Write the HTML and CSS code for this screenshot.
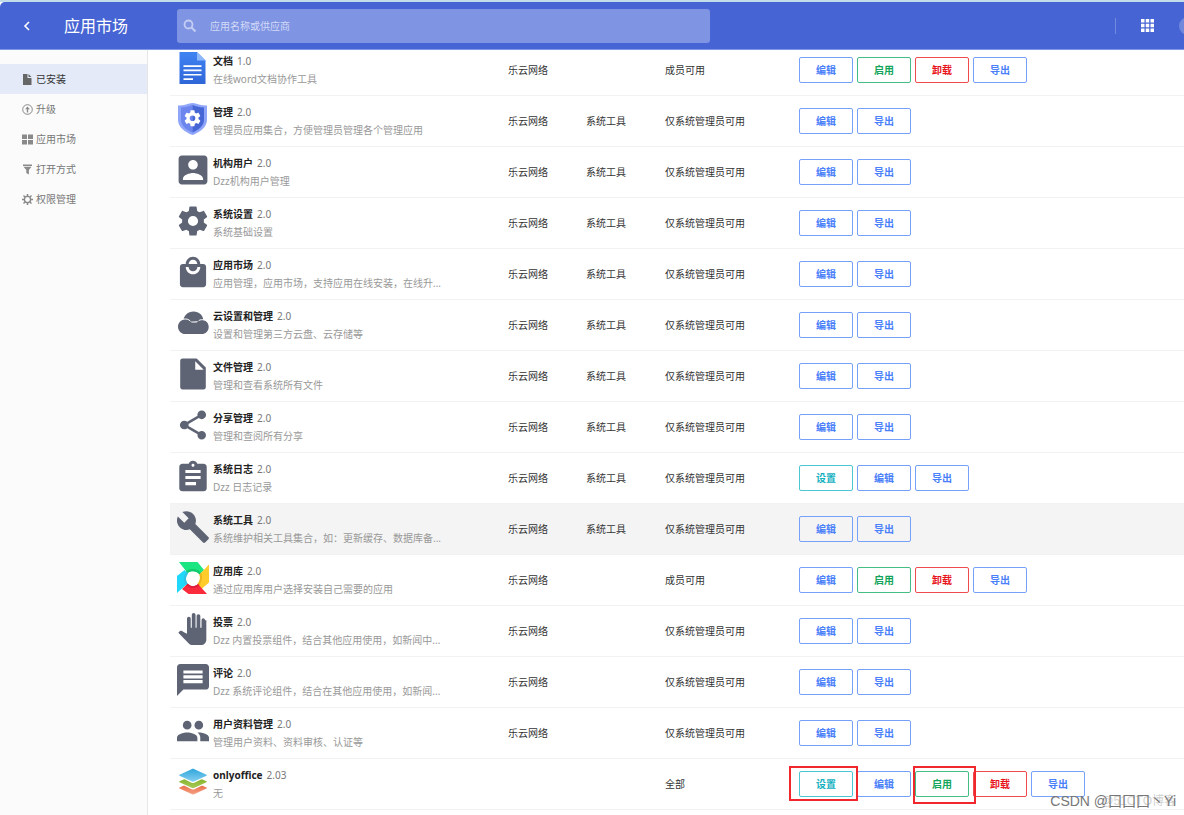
FILE: index.html
```html
<!DOCTYPE html>
<html lang="zh-CN">
<head>
<meta charset="utf-8">
<title>应用市场</title>
<link rel="stylesheet" href="styles.css">
</head>
<body>
<svg class="sprite" aria-hidden="true">
  <symbol id="i-doc" viewBox="0 0 32 32">
    <linearGradient id="gd" x1="0" y1="0" x2="0" y2="1"><stop offset="0" stop-color="#3f83f3"/><stop offset="1" stop-color="#2f66d8"/></linearGradient>
    <path fill="url(#gd)" d="M2.500 0H20l8.500 8.500V32h-26z"/><path fill="#8db8fb" d="M20 0l8.500 8.500H20z"/>
    <path fill="#fff" d="M6.500 13.300h18v1.600h-18zM6.500 17.600h18v1.600h-18zM6.500 21.900h18v1.600h-18zM6.500 26.200h9.500v1.700H6.500z"/>
  </symbol>
  <symbol id="i-shield" viewBox="0 0 32 32">
    <path fill="#8fa5fa" d="M1 2.500C6 3 11 .5 15.500 0 20 .5 25 3 30 2.500V17c0 7-7.500 12.500-14.500 15C8.500 29.500 1 24 1 17z"/>
    <path fill="#6c86ee" d="M4 4.500c4 0 8-1 11.500-2.500v27.500C9.500 27 4 22.500 4 17z"/>
    <path fill="#4766d5" d="M27 4.500c-4 0-8-1-11.500-2.500v27.500C21.500 27 27 22.500 27 17z"/>
    <path fill="#fff" transform="translate(5.900 5.700) scale(.8)" d="M19.430 12.980c.04-.32.07-.64.07-.98s-.03-.66-.07-.98l2.110-1.650c.19-.15.24-.42.12-.64l-2-3.460c-.12-.22-.39-.3-.61-.22l-2.490 1c-.52-.4-1.080-.73-1.690-.98l-.38-2.650C14.460 2.180 14.250 2 14 2h-4c-.25 0-.46.18-.49.42l-.38 2.650c-.61.25-1.170.59-1.690.98l-2.490-1c-.23-.09-.49 0-.61.22l-2 3.460c-.13.22-.07.49.12.64l2.110 1.650c-.04.32-.07.65-.07.98s.03.66.07.98l-2.110 1.650c-.19.15-.24.42-.12.64l2 3.460c.12.22.39.3.61.22l2.490-1c.52.4 1.080.73 1.690.98l.38 2.650c.03.24.24.42.49.42h4c.25 0 .46-.18.49-.42l.38-2.650c.61-.25 1.170-.59 1.690-.98l2.490 1c.23.09.49 0 .61-.22l2-3.460c.12-.22.07-.49-.12-.64zM12 15.500a3.500 3.500 0 1 1 0-7 3.500 3.500 0 0 1 0 7z"/>
  </symbol>
  <symbol id="i-user" viewBox="2 2 20 20"><path d="M3 5v14c0 1.100.89 2 2 2h14c1.100 0 2-.9 2-2V5c0-1.100-.9-2-2-2H5c-1.110 0-2 .9-2 2zm12 3.700c0 1.660-1.340 3-3 3s-3-1.340-3-3 1.340-3 3-3 3 1.340 3 3zm-9.300 8.800c0-2.300 4.300-3.600 6.300-3.600s6.300 1.300 6.300 3.600v.8H5.700v-.8z"/></symbol>
  <symbol id="i-gear" viewBox="1 1 22 22"><path d="M19.430 12.980c.04-.32.07-.64.07-.98s-.03-.66-.07-.98l2.110-1.650c.19-.15.24-.42.12-.64l-2-3.460c-.12-.22-.39-.3-.61-.22l-2.490 1c-.52-.4-1.080-.73-1.690-.98l-.38-2.650C14.460 2.180 14.250 2 14 2h-4c-.25 0-.46.18-.49.42l-.38 2.650c-.61.25-1.170.59-1.690.98l-2.490-1c-.23-.09-.49 0-.61.22l-2 3.460c-.13.22-.07.49.12.64l2.110 1.650c-.04.32-.07.65-.07.98s.03.66.07.98l-2.110 1.650c-.19.15-.24.42-.12.64l2 3.460c.12.22.39.3.61.22l2.490-1c.52.4 1.080.73 1.690.98l.38 2.650c.03.24.24.42.49.42h4c.25 0 .46-.18.49-.42l.38-2.650c.61-.25 1.170-.59 1.690-.98l2.490 1c.23.09.49 0 .61-.22l2-3.460c.12-.22.07-.49-.12-.64zM12 15.500a3.500 3.500 0 1 1 0-7 3.500 3.500 0 0 1 0 7z"/></symbol>
  <symbol id="i-bag" viewBox="1 .5 22 22"><path d="M19 6h-2c0-2.760-2.240-5-5-5S7 3.240 7 6H5c-1.100 0-1.990.9-1.990 2L3 20c0 1.100.9 2 2 2h14c1.100 0 2-.9 2-2V8c0-1.100-.9-2-2-2zm-7-3c1.660 0 3 1.340 3 3H9c0-1.660 1.340-3 3-3zm0 10c-2.760 0-5-2.240-5-5h2c0 1.660 1.340 3 3 3s3-1.340 3-3h2c0 2.760-2.240 5-5 5z"/></symbol>
  <symbol id="i-cloud" viewBox="0 0 32 32"><path d="M6 15C6.500 8.500 11 4.500 16.500 4.500S26 8 26.500 14z"/><path d="M8.200 12.400c3 0 5.200 1.500 6.400 3.200h5.200c1-1.500 2.800-2.600 5.200-2.600 3.800 0 6.700 3 6.700 6.900S28.600 27 24.700 27H8.300C4.200 27 1 23.800 1 19.700s3.200-7.300 7.200-7.300z"/><path class="gap" d="M6 12.200c3.200-.6 5.600 0 7.400 1.900M27.500 13c-2.300-.6-4.300-.3-5.800.6"/></symbol>
  <symbol id="i-file" viewBox="2 2 20 20"><path fill-rule="evenodd" d="M5.500 2.300c-1 0-1.500.6-1.500 1.500v16.400c0 1 .6 1.500 1.500 1.500h13c1 0 1.500-.6 1.500-1.500V8l-5.700-5.700zm7.900 1.700 5.300 5.300h-5.300z"/></symbol>
  <symbol id="i-share" viewBox="1 1 22 22"><path d="M18 16.080c-.76 0-1.440.3-1.960.77L8.910 12.700c.05-.23.09-.46.09-.7s-.04-.47-.09-.7l7.050-4.110c.54.5 1.250.81 2.040.81 1.660 0 3-1.340 3-3s-1.340-3-3-3-3 1.340-3 3c0 .24.04.47.09.7L8.040 9.810C7.500 9.310 6.790 9 6 9c-1.660 0-3 1.340-3 3s1.340 3 3 3c.79 0 1.500-.31 2.040-.81l7.120 4.160c-.05.21-.08.43-.08.65 0 1.610 1.310 2.920 2.920 2.920s2.920-1.310 2.920-2.920-1.310-2.920-2.920-2.920z"/></symbol>
  <symbol id="i-log" viewBox="1.500 .5 21 21"><path d="M19 3h-4.180C14.400 1.840 13.300 1 12 1c-1.300 0-2.400.84-2.820 2H5c-1.100 0-2 .9-2 2v14c0 1.100.9 2 2 2h14c1.100 0 2-.9 2-2V5c0-1.100-.9-2-2-2zm-7 0c.55 0 1 .45 1 1s-.45 1-1 1-1-.45-1-1 .45-1 1-1zm2 14H7v-2h7v2zm3-4H7v-2h10v2zm0-4H7V7h10v2z"/></symbol>
  <symbol id="i-tool" viewBox="1 1 22 22"><path d="M22.700 19l-9.100-9.100c.9-2.300.4-5-1.500-6.900-2-2-5-2.400-7.400-1.300L9 6 6 9 1.600 4.700C.4 7.100.9 10.100 2.900 12.100c1.900 1.900 4.600 2.400 6.900 1.500l9.100 9.100c.4.4 1 .4 1.400 0l2.300-2.300c.5-.4.5-1.100.1-1.400z"/></symbol>
  <symbol id="i-store" viewBox="0 0 32 32">
    <path fill="#1be580" d="M2 0h18.500L27 8l-4.500 4.500c-3-3.800-8-4.300-12-1.500z"/>
    <path fill="#12c96c" d="M10.500 11c4-2.800 9-2.300 12 1.500l1.600-1.600c-4-4.600-10.500-5-15.200-1.400z"/>
    <path fill="#ffcc2b" d="M32 2.500v18L24.500 27l-4-5c2.600-3 3-6 2-9.500z"/>
    <path fill="#edb51c" d="M22.500 12.500c1 3.500.6 6.500-2 9.500l1.300 1.700c3.300-3.700 4-8 2.400-12.900z"/>
    <path fill="#fb2b3e" d="M30 32H11.500L5 27l5.500-5.500c3 3.300 7.500 3.300 10.500.5z"/>
    <path fill="#e01f3c" d="M10.500 21.500c3 3.300 7.500 3.300 10.500.5l1.400 1.600c-4 3.400-9.300 3.300-13.300-.7z"/>
    <path fill="#1fd8fa" d="M0 31V14l7.500-6 3.500 3.500c-2.300 3-2.800 6.500-.5 10z"/>
    <path fill="#35c2e2" d="M11 11.500c-2.300 3-2.800 6.500-.5 10L9 23c-3-4-2.800-8.700.5-13z"/>
  </symbol>
  <symbol id="i-hand" viewBox="0 0 24 24"><path d="M22 5.500V20c0 2.200-1.800 4-4 4h-6.300c-1.080 0-2.100-.43-2.850-1.190L1 14.830s1.260-1.230 1.300-1.250c.22-.19.49-.29.79-.29.22 0 .42.06.6.16.04.01 3.810 2.060 3.810 2.060V4.300c0-.83.57-1.500 1.400-1.500s1.400.67 1.400 1.500V11h.8V1.500c0-.83.57-1.500 1.400-1.500s1.400.67 1.400 1.500V11h.8V2.500c0-.83.57-1.500 1.400-1.500s1.400.67 1.400 1.500V11h.9V5.500c0-.83.57-1.500 1.300-1.500s1.300.67 1.300 1.500z"/></symbol>
  <symbol id="i-comment" viewBox="2 2 20 20"><path d="M20 2H4c-1.100 0-1.990.9-1.990 2L2 22l4-4h14c1.100 0 2-.9 2-2V4c0-1.100-.9-2-2-2zm-2 12H6v-2h12v2zm0-3H6V9h12v2zm0-3H6V6h12v2z"/></symbol>
  <symbol id="i-people" viewBox="1 1 22 22"><path d="M16 11c1.660 0 2.990-1.340 2.990-3S17.660 5 16 5c-1.660 0-3 1.340-3 3s1.340 3 3 3zm-8 0c1.660 0 2.990-1.340 2.990-3S9.660 5 8 5C6.340 5 5 6.340 5 8s1.340 3 3 3zm0 2c-2.330 0-7 1.170-7 3.500V19h14v-2.500c0-2.330-4.670-3.500-7-3.500zm8 0c-.29 0-.62.02-.97.05 1.160.84 1.970 1.970 1.970 3.450V19h6v-2.500c0-2.330-4.670-3.500-7-3.500z"/></symbol>
  <symbol id="i-office" viewBox="0 0 32 32">
    <linearGradient id="gr" x1="0" y1="0" x2="0" y2="1"><stop offset="0" stop-color="#e2592f"/><stop offset="1" stop-color="#f6a184"/></linearGradient>
    <linearGradient id="gg" x1="0" y1="0" x2="0" y2="1"><stop offset="0" stop-color="#78a91b"/><stop offset="1" stop-color="#a9cc5a"/></linearGradient>
    <linearGradient id="gb" x1="0" y1="0" x2="0" y2="1"><stop offset="0" stop-color="#31a6dc"/><stop offset="1" stop-color="#84cff0"/></linearGradient>
    <path fill="url(#gr)" d="M2.500 21.500 16 15.500l13.500 6c.5.300.5.700 0 1l-12 5.500c-1 .5-2 .5-3 0l-12-5.500c-.5-.3-.5-.7 0-1z"/>
    <path fill="#fff" d="M2 17l12.500 6.200c1 .4 2 .4 3 0L30 17z"/>
    <path fill="url(#gg)" d="M2.500 15.200 16 9.500l13.500 5.700c.5.300.5.700 0 1l-12 5.600c-1 .5-2 .5-3 0l-12-5.600c-.5-.3-.5-.7 0-1z"/>
    <path fill="#fff" d="M2 10.500l12.500 6.200c1 .4 2 .4 3 0L30 10.500z"/>
    <path fill="url(#gb)" d="M2.500 8.700 14.500 3.200c1-.5 2-.5 3 0l12 5.500c.5.300.5.700 0 1l-12 5.600c-1 .5-2 .5-3 0l-12-5.600c-.5-.3-.5-.7 0-1z"/>
  </symbol>
</svg>

<header class="topbar">
  <button class="back" type="button" aria-label="返回"><svg width="8" height="10" viewBox="0 0 8 10"><path d="M6 1 2 5l4 4" fill="none" stroke="#fff" stroke-width="1.600"/></svg></button>
  <h1 class="title">应用市场</h1>
  <label class="search">
    <svg width="14" height="14" viewBox="0 0 14 14"><circle cx="5.500" cy="5.500" r="4" fill="none" stroke="#c3cdf3" stroke-width="1.800"/><path d="M8.500 8.500l4 4" stroke="#c3cdf3" stroke-width="2.200"/></svg>
    <input type="text" placeholder="应用名称或供应商" aria-label="搜索应用">
  </label>
  <div class="actions">
    <span class="divider"></span>
    <button class="apps" type="button" aria-label="应用"><svg width="13" height="13" viewBox="0 0 13 13" fill="#fff"><path d="M0 0h3.500v3.500H0zM4.750 0h3.500v3.500h-3.500zM9.500 0H13v3.500H9.500zM0 4.750h3.500v3.500H0zM4.750 4.750h3.500v3.500h-3.500zM9.500 4.750H13v3.500H9.500zM0 9.500h3.500V13H0zM4.750 9.500h3.500V13h-3.500zM9.500 9.500H13V13H9.500z"/></svg></button>
    <span class="avatar"></span>
  </div>
</header>

<div class="layout">
  <nav class="sidebar">
    <a class="nav active" href="#"><svg viewBox="0 0 11 11"><path d="M1 0h4.500v4H9.500v7H1zM6.500 0l3 3h-3z"/></svg>已安装</a>
    <a class="nav" href="#"><svg viewBox="0 0 11 11"><circle cx="5.500" cy="5.500" r="4.800" fill="none" stroke="#888"/><path d="M5.500 2.500l2.400 2.700H6.200v3.300H4.800V5.200H3.100z"/></svg>升级</a>
    <a class="nav" href="#"><svg viewBox="0 0 11 11"><path d="M0 .5h5V5H0zM6 .5h5V5H6zM0 6h5v4.500H0zM6 6h5v4.500H6z"/></svg>应用市场</a>
    <a class="nav" href="#"><svg viewBox="0 0 11 11"><path d="M1 .5h9V2H1zM1.500 2.700h8L6.900 6v4.500L4.300 9V6z"/></svg>打开方式</a>
    <a class="nav" href="#"><svg viewBox="0 0 11 11"><circle cx="5.500" cy="5.500" r="3.100" fill="none" stroke="#888" stroke-width="1.400"/><path d="M4.700 0h1.600v2H4.700zM4.700 9h1.600v2H4.700zM0 4.700h2v1.600H0zM9 4.700h2v1.600H9zM1 2l1-1 1.500 1.500-1 1zM7.500 8.500l1-1L10 9l-1 1zM9 1l1 1-1.500 1.500-1-1zM1 9l1.500-1.500 1 1L2 10z"/></svg>权限管理</a>
  </nav>

  <main class="content">
    <table class="apps-table">
      <colgroup><col class="c-name"><col class="c-vendor"><col class="c-kind"><col class="c-scope"><col></colgroup>
      <tbody>
        <tr><td><div class="app"><svg class="ic"><use href="#i-doc"/></svg><div><div class="name"><b>文档</b>1.0</div><div class="desc">在线word文档协作工具</div></div></div></td><td>乐云网络</td><td></td><td>成员可用</td><td><div class="ops"><button class="btn">编辑</button><button class="btn green">启用</button><button class="btn red">卸载</button><button class="btn">导出</button></div></td></tr>
        <tr><td><div class="app"><svg class="ic"><use href="#i-shield"/></svg><div><div class="name"><b>管理</b>2.0</div><div class="desc">管理员应用集合，方便管理员管理各个管理应用</div></div></div></td><td>乐云网络</td><td>系统工具</td><td>仅系统管理员可用</td><td><div class="ops"><button class="btn">编辑</button><button class="btn">导出</button></div></td></tr>
        <tr><td><div class="app"><svg class="ic"><use href="#i-user"/></svg><div><div class="name"><b>机构用户</b>2.0</div><div class="desc">Dzz机构用户管理</div></div></div></td><td>乐云网络</td><td>系统工具</td><td>仅系统管理员可用</td><td><div class="ops"><button class="btn">编辑</button><button class="btn">导出</button></div></td></tr>
        <tr><td><div class="app"><svg class="ic"><use href="#i-gear"/></svg><div><div class="name"><b>系统设置</b>2.0</div><div class="desc">系统基础设置</div></div></div></td><td>乐云网络</td><td>系统工具</td><td>仅系统管理员可用</td><td><div class="ops"><button class="btn">编辑</button><button class="btn">导出</button></div></td></tr>
        <tr><td><div class="app"><svg class="ic"><use href="#i-bag"/></svg><div><div class="name"><b>应用市场</b>2.0</div><div class="desc">应用管理，应用市场，支持应用在线安装，在线升...</div></div></div></td><td>乐云网络</td><td>系统工具</td><td>仅系统管理员可用</td><td><div class="ops"><button class="btn">编辑</button><button class="btn">导出</button></div></td></tr>
        <tr><td><div class="app"><svg class="ic"><use href="#i-cloud"/></svg><div><div class="name"><b>云设置和管理</b>2.0</div><div class="desc">设置和管理第三方云盘、云存储等</div></div></div></td><td>乐云网络</td><td>系统工具</td><td>仅系统管理员可用</td><td><div class="ops"><button class="btn">编辑</button><button class="btn">导出</button></div></td></tr>
        <tr><td><div class="app"><svg class="ic"><use href="#i-file"/></svg><div><div class="name"><b>文件管理</b>2.0</div><div class="desc">管理和查看系统所有文件</div></div></div></td><td>乐云网络</td><td>系统工具</td><td>仅系统管理员可用</td><td><div class="ops"><button class="btn">编辑</button><button class="btn">导出</button></div></td></tr>
        <tr><td><div class="app"><svg class="ic"><use href="#i-share"/></svg><div><div class="name"><b>分享管理</b>2.0</div><div class="desc">管理和查阅所有分享</div></div></div></td><td>乐云网络</td><td>系统工具</td><td>仅系统管理员可用</td><td><div class="ops"><button class="btn">编辑</button><button class="btn">导出</button></div></td></tr>
        <tr><td><div class="app"><svg class="ic"><use href="#i-log"/></svg><div><div class="name"><b>系统日志</b>2.0</div><div class="desc">Dzz 日志记录</div></div></div></td><td>乐云网络</td><td>系统工具</td><td>仅系统管理员可用</td><td><div class="ops"><button class="btn teal">设置</button><button class="btn">编辑</button><button class="btn">导出</button></div></td></tr>
        <tr class="hover"><td><div class="app"><svg class="ic"><use href="#i-tool"/></svg><div><div class="name"><b>系统工具</b>2.0</div><div class="desc">系统维护相关工具集合，如：更新缓存、数据库备...</div></div></div></td><td>乐云网络</td><td>系统工具</td><td>仅系统管理员可用</td><td><div class="ops"><button class="btn">编辑</button><button class="btn">导出</button></div></td></tr>
        <tr><td><div class="app"><svg class="ic"><use href="#i-store"/></svg><div><div class="name"><b>应用库</b>2.0</div><div class="desc">通过应用库用户选择安装自己需要的应用</div></div></div></td><td>乐云网络</td><td></td><td>成员可用</td><td><div class="ops"><button class="btn">编辑</button><button class="btn green">启用</button><button class="btn red">卸载</button><button class="btn">导出</button></div></td></tr>
        <tr><td><div class="app"><svg class="ic"><use href="#i-hand"/></svg><div><div class="name"><b>投票</b>2.0</div><div class="desc">Dzz 内置投票组件，结合其他应用使用，如新闻中...</div></div></div></td><td>乐云网络</td><td></td><td>仅系统管理员可用</td><td><div class="ops"><button class="btn">编辑</button><button class="btn">导出</button></div></td></tr>
        <tr><td><div class="app"><svg class="ic"><use href="#i-comment"/></svg><div><div class="name"><b>评论</b>2.0</div><div class="desc">Dzz 系统评论组件，结合在其他应用使用，如新闻...</div></div></div></td><td>乐云网络</td><td></td><td>仅系统管理员可用</td><td><div class="ops"><button class="btn">编辑</button><button class="btn">导出</button></div></td></tr>
        <tr><td><div class="app"><svg class="ic"><use href="#i-people"/></svg><div><div class="name"><b>用户资料管理</b>2.0</div><div class="desc">管理用户资料、资料审核、认证等</div></div></div></td><td>乐云网络</td><td></td><td>仅系统管理员可用</td><td><div class="ops"><button class="btn">编辑</button><button class="btn">导出</button></div></td></tr>
        <tr><td><div class="app"><svg class="ic"><use href="#i-office"/></svg><div><div class="name"><b>onlyoffice</b>2.03</div><div class="desc">无</div></div></div></td><td></td><td></td><td>全部</td><td><div class="ops"><button class="btn teal">设置</button><button class="btn">编辑</button><button class="btn green">启用</button><button class="btn red">卸载</button><button class="btn">导出</button><span class="mark mark-settings"></span><span class="mark mark-enable"></span></div></td></tr>
      </tbody>
    </table>
  </main>
</div>
<div class="watermark"><span class="wm-site">@51CTO博客</span><span class="wm-author">CSDN @囗囗囗丶Yi</span></div>
</body>
</html>
```

FILE: styles.css
```css
* { box-sizing: border-box; }
body {
  margin: 0;
  min-height: 100vh;
  display: flex;
  flex-direction: column;
  position: relative;
  border-top: 2px solid #c3dcea;
  background: #fff;
  color: #333;
  font: 10px/18px "Noto Sans", "Noto Sans CJK SC", sans-serif;
}
button { font: inherit; cursor: pointer; }
.sprite { position: absolute; width: 0; height: 0; }

.topbar {
  display: flex;
  align-items: center;
  height: 48px;
  flex: none;
  position: relative;
  z-index: 1;
  overflow: hidden;
  background: #4664d3;
  border-bottom: 1px solid #7f96e6;
  border-radius: 5px 0 0 0;
}
.back, .apps { display: flex; padding: 0; border: 0; background: none; }
.back { margin-left: 23px; }
.title { width: 113px; margin: 0 0 0 33px; color: #fff; font-size: 16px; line-height: 24px; font-weight: 400; }
.search {
  display: flex;
  align-items: center;
  gap: 13px;
  width: 45%;
  height: 34px;
  padding-left: 6px;
  border-radius: 3px;
  background: #7f94e2;
}
.search input { flex: 1; min-width: 0; border: 0; padding: 0; outline: 0; background: none; color: #fff; font: inherit; }
.search input::placeholder { color: #d3daf7; opacity: 1; }
.actions { display: flex; align-items: center; gap: 25px; margin-left: auto; margin-right: -13px; }
.divider { width: 1px; height: 16px; background: #7289df; }
.avatar { width: 18px; height: 18px; border-radius: 50%; background: #7188dc; }

.layout { flex: 1; display: flex; overflow: hidden; }
.sidebar { width: 148px; flex: none; padding-top: 14px; border-right: 1px solid #e6e6e6; background: #fbfbfb; }
.nav { display: flex; align-items: center; gap: 3px; height: 30px; padding-left: 22px; color: #777; text-decoration: none; }
.nav svg { width: 11px; height: 11px; fill: #8a8a8a; }
.nav.active { background: #e4eaf8; color: #333; }
.nav.active svg { fill: #666; }

.content { flex: 1; min-width: 0; margin-top: -5px; padding-left: 22px; }
.apps-table { width: 100%; table-layout: fixed; border-collapse: separate; border-spacing: 0; }
.c-name { width: 338px; }
.c-vendor { width: 78px; }
.c-kind { width: 79px; }
.c-scope { width: 134px; }
.apps-table td { height: 51px; padding: 0; border-bottom: 1px solid #f2f2f2; white-space: nowrap; }
.hover td { background: #f4f4f4; }
.app { display: flex; gap: 4px; padding-left: 7px; }
.ic { width: 32px; height: 32px; fill: #5e6474; }
.gap { fill: none; stroke: #fff; stroke-width: 1; }
.name { display: flex; gap: 4px; color: #777; }
.name b { color: #222; }
.desc { color: #999; }

.ops { position: relative; display: flex; gap: 4px; }
.btn { width: 54px; height: 26px; padding: 0; border: 1px solid #76a1fb; border-radius: 2px; background: transparent; color: #4a80fa; font-weight: 700; line-height: 18px; }
.btn.green { border-color: #44bd84; color: #13a55b; }
.btn.red { border-color: #ef4a4e; color: #e8141b; }
.btn.teal { border-color: #4cc6d1; color: #14b1c1; }
.mark { position: absolute; top: -5px; border: 2px solid #f0282d; pointer-events: none; }
.mark-settings { left: -10px; width: 69px; height: 35px; }
.mark-enable { left: 114px; width: 63px; height: 38px; }

.watermark { position: absolute; right: 8px; bottom: 5px; color: #777; font: 14px/18px "Liberation Sans", "Noto Sans CJK SC", sans-serif; pointer-events: none; }
.wm-site { position: absolute; right: 0; color: #d3d3d3; font-size: 12px; }
.wm-author { position: relative; }
```
